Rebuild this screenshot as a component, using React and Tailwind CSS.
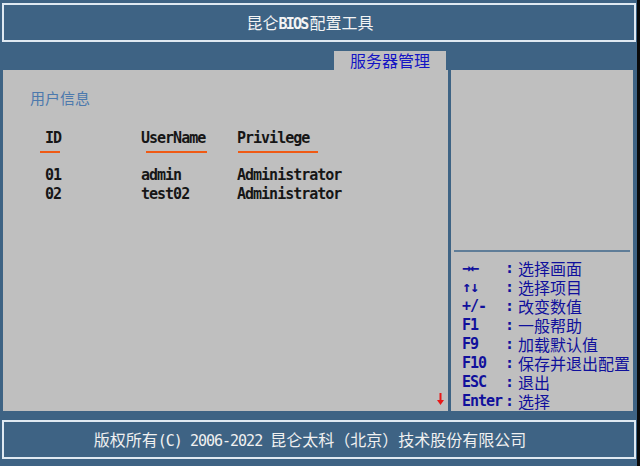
const mono = { fontFamily: '"DejaVu Sans Mono", "Liberation Mono", "Noto Sans CJK SC", monospace' };

const helpItems = [
  ["→←", "选择画面"],
  ["↑↓", "选择项目"],
  ["+/-", "改变数值"],
  ["F1", "一般帮助"],
  ["F9", "加载默认值"],
  ["F10", "保存并退出配置"],
  ["ESC", "退出"],
  ["Enter", "选择"],
];

const users = [
  ["01", "admin", "Administrator"],
  ["02", "test02", "Administrator"],
];

function DownArrow() {
  return (
    <svg width="7" height="12" viewBox="0 0 7 12">
      <rect x="2.5" y="0" width="2" height="8" fill="#e81818" />
      <path d="M0 7 L7 7 L3.5 12 Z" fill="#e81818" />
    </svg>
  );
}

export default function App() {
  return (
    <div
      className="w-[640px] h-[466px] flex bg-[#3e6384] overflow-hidden"
      style={{ fontFamily: '"Noto Sans CJK SC", "DejaVu Sans", sans-serif' }}
    >
      <div className="w-[637px] flex flex-col">
        <div className="h-[3px]" />
        <div className="ml-[2px] mr-[1px] h-[39px] border-2 border-[#dfe9f2] flex items-center justify-center pr-[18px] text-[#f4f4f4] text-[16px] leading-[20px]">
          <span>
            昆仑<span className="font-bold text-[15px] tracking-[-1.8px] pr-[2px]" style={mono}>BIOS</span>配置工具
          </span>
        </div>
        <div className="h-[9px]" />
        <div className="h-[19px] flex">
          <div className="ml-[334px] w-[112px] bg-[#bfbfbf] text-[#1414c4] text-[16px] leading-[19px] text-center">
            服务器管理
          </div>
        </div>

        <div className="h-[341px] flex">
          <div className="w-[3px]" />
          <div className="w-[445px] bg-[#bfbfbf] flex flex-col">
            <div className="pl-[27px] pt-[19px] text-[15px] leading-[18px] text-[#4c79ad]">用户信息</div>

            <div className="mt-[22px] text-[#161616] font-bold text-[15px] tracking-[-1px]" style={mono}>
              <div className="flex pl-[42px] leading-[19px]">
                <div className="w-[96px]">ID</div>
                <div className="w-[96px]">UserName</div>
                <div className="w-[96px]">Privilege</div>
              </div>
              <div className="flex h-[2px] mt-[3px]">
                <div className="ml-[37px] w-[20px] bg-[#f05a14]" />
                <div className="ml-[86px] w-[61px] bg-[#f05a14]" />
                <div className="ml-[31px] w-[80px] bg-[#f05a14]" />
              </div>
              <div className="mt-[13px]">
                {users.map((u) => (
                  <div key={u[0]} className="flex pl-[42px] leading-[19px]">
                    <div className="w-[96px]">{u[0]}</div>
                    <div className="w-[96px]">{u[1]}</div>
                    <div className="w-[120px]">{u[2]}</div>
                  </div>
                ))}
              </div>
            </div>

            <div className="mt-auto flex justify-end pr-[4px] pb-[6px]">
              <DownArrow />
            </div>
          </div>
          <div className="w-[3px]" />
          <div className="w-[182px] bg-[#bfbfbf] flex flex-col">
            <div className="h-[180px]" />
            <div className="mx-[3px] h-[2px] bg-[#5f7d98]" />
            <div className="pt-[7px] pl-[11px] text-[#10109c]">
              {helpItems.map(([k, d]) => (
                <div key={k} className="flex leading-[19px] h-[19px]">
                  <div className="w-[43px] font-bold text-[15px] leading-[19px] tracking-[-1px]" style={mono}>{k}</div>
                  <div className="w-[13px] font-bold text-[15px] leading-[19px]" style={mono}>:</div>
                  <div className="text-[16px] leading-[19px] whitespace-nowrap">{d}</div>
                </div>
              ))}
            </div>
          </div>
        </div>

        <div className="h-[9px]" />
        <div className="ml-[2px] mr-[1px] h-[39px] border-2 border-[#dfe9f2] flex items-center justify-center pr-[18px] text-[#f0f0f0] text-[16px] leading-[20px] whitespace-pre">
          <span>
            版权所有<span className="text-[15px] tracking-[-1px]" style={mono}>(C) 2006-2022 </span>昆仑太科（北京）技术股份有限公司
          </span>
        </div>
      </div>
      <div className="w-[3px] bg-[#0a0a0a]" />
    </div>
  );
}
